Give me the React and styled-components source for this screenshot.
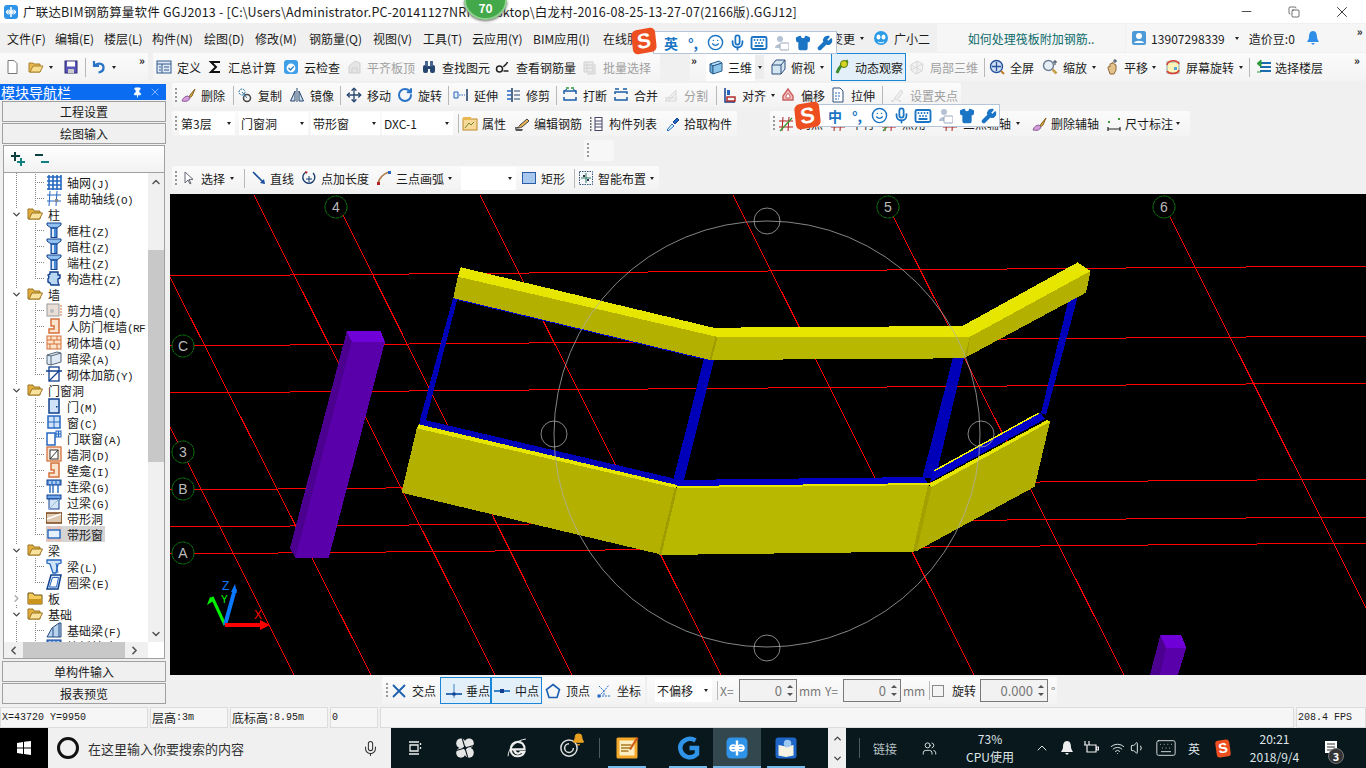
import React from "react";
import styled, { createGlobalStyle } from "styled-components";
import { Mic, Smile, Keyboard, Shirt, Wrench, Bell, Wifi, Volume1, ChevronUp, ChevronDown, ChevronLeft, ChevronRight, Move, X, Minus, Copy, Pin, RotateCw, Users } from "lucide-react";

const GlobalStyle = createGlobalStyle`
  html, body { margin: 0; padding: 0; background: #f0f0f0; overflow: hidden; }
  * { box-sizing: border-box; }
  body { font-family: "Noto Sans CJK SC", "Noto Sans", sans-serif; font-size: 12px; color: #1b1b1b; }
`;

const Page = styled.div`
  width: 1366px;
  height: 768px;
  display: flex;
  flex-direction: column;
  position: relative;
  overflow: hidden;
  background: #f0f0f0;
`;

/* ---------- title + menu ---------- */
const TitleBar = styled.div`
  height: 23px;
  display: flex;
  align-items: center;
  background: #fff;
  padding-left: 3px;
  flex: none;
`;
const TitleText = styled.div`
  margin-left: 4px;
  font-size: 12.5px;
  white-space: nowrap;
  letter-spacing: 0.2px;
`;
const WinButtons = styled.div`
  margin-left: auto;
  display: flex;
`;
const WinButton = styled.div`
  width: 48px;
  height: 22px;
  display: flex;
  align-items: center;
  justify-content: center;
  color: #111;
`;
const ScoreBadge = styled.div`
  position: absolute;
  left: 464px;
  top: 0;
  width: 43px;
  height: 20px;
  border-radius: 0 0 22px 22px / 0 0 20px 20px;
  background: #43a84a;
  border: 2px solid #8fd08f;
  border-top: none;
  box-shadow: 0 1px 3px #666;
  color: #fff;
  font-size: 12px;
  font-weight: 700;
  line-height: 15px;
  text-align: center;
`;
const MenuBar = styled.div`
  height: 30px;
  display: flex;
  align-items: center;
  flex: none;
`;
const MenuItem = styled.div`
  width: ${(p) => p.$w}px;
  padding-left: ${(p) => p.$pad ?? 7}px;
  flex: none;
  display: flex;
  align-items: center;
  gap: 5px;
  white-space: nowrap;
`;
const NewsTab = styled.div`
  width: 188px;
  height: 28px;
  flex: none;
  background: #f6f6f6;
  border-radius: 3px;
  color: #0d6b6b;
  display: flex;
  align-items: center;
  justify-content: center;
`;
const UserBox = styled.div`
  flex: 1;
  height: 28px;
  margin-left: 1px;
  padding-left: 5px;
  background: #f6f6f6;
  display: flex;
  align-items: center;
  gap: 4px;
  position: relative;
`;
const UserName = styled.span`
  font-size: 12px;
  letter-spacing: 0.05px;
`;

/* ---------- toolbars ---------- */
const Row = styled.div`
  height: ${(p) => p.$h}px;
  margin-top: ${(p) => p.$mt ?? 0}px;
  display: flex;
  flex: none;
`;
const Group = styled.div`
  width: ${(p) => p.$w}px;
  margin-left: ${(p) => p.$ml ?? 0}px;
  padding-left: ${(p) => p.$pad ?? 1}px;
  flex: none;
  display: flex;
  align-items: center;
  background: linear-gradient(#fbfbfb, #f3f3f3);
  border-radius: 2px;
`;
const ToolItem = styled.div`
  width: ${(p) => p.$w}px;
  height: 100%;
  padding-left: ${(p) => p.$pad ?? 0}px;
  margin-left: ${(p) => p.$ml ?? 0}px;
  flex: none;
  display: flex;
  align-items: center;
  gap: ${(p) => p.$gap ?? 5}px;
  white-space: nowrap;
  overflow: hidden;
  color: ${(p) => (p.$dis ? "#a0a0a0" : "#1b1b1b")};
  background: ${(p) => (p.$on ? "#e3eff9" : p.$white ? "#fff" : "transparent")};
  border: ${(p) => (p.$on ? "1px solid #1a86d8" : "none")};
  svg { opacity: ${(p) => (p.$dis ? 0.4 : 1)}; }
`;
const Caret = styled.i`
  flex: none;
  width: 0;
  height: 0;
  margin-left: ${(p) => p.$ml ?? 0}px;
  border-left: 2.5px solid transparent;
  border-right: 2.5px solid transparent;
  border-top: 3px solid #222;
`;
const Sep = styled.div`
  width: ${(p) => p.$w}px;
  margin-left: ${(p) => p.$ml ?? 0}px;
  height: 19px;
  flex: none;
  border-left: 1px solid #b8b8b8;
`;
const Grip = styled.div`
  width: 5px;
  height: 15px;
  flex: none;
  margin-left: 2px;
  background: repeating-linear-gradient(#999 0 2px, transparent 2px 4px) left / 2px 100% no-repeat;
`;
const Overflow = styled.span`
  flex: none;
  width: ${(p) => p.$w}px;
  padding-left: ${(p) => p.$pad ?? 0}px;
  margin-left: ${(p) => p.$ml ?? 0}px;
  align-self: flex-start;
  font-size: 11px;
  line-height: 14px;
  font-weight: 700;
`;
const Select = styled.div`
  width: ${(p) => p.$w}px;
  height: 23px;
  margin-left: ${(p) => p.$ml ?? 0}px;
  margin-right: ${(p) => p.$mr ?? 0}px;
  padding: 0 4px 0 2px;
  flex: none;
  display: flex;
  align-items: center;
  justify-content: space-between;
  background: #fff;
`;
const CaretBox = styled.div`
  width: 9px;
  height: 24px;
  flex: none;
  display: flex;
  align-items: center;
  justify-content: center;
  background: #ececec;
`;
const GripBox = styled.div`
  margin-left: 414px;
  width: 30px;
  padding-left: 1px;
  display: flex;
  align-items: center;
  background: #f7f7f7;
  border-radius: 2px;
`;

/* ---------- main area ---------- */
const Main = styled.div`
  height: 626px;
  display: flex;
  flex: none;
`;
const LeftPane = styled.div`
  width: 166px;
  padding-top: 3px;
  flex: none;
  display: flex;
  flex-direction: column;
`;
const PaneHead = styled.div`
  height: 16px;
  flex: none;
  background: #0a6cf0;
  color: #fff;
  font-size: 14px;
  line-height: 16px;
  display: flex;
  align-items: center;
  padding-left: 1px;
  svg { flex: none; }
`;
const PaneTitle = styled.span`
  flex: 1;
`;
const PaneButton = styled.div`
  height: 21px;
  margin: ${(p) => p.$mt ?? 1}px 0 0 2px;
  flex: none;
  border: 1px solid #a0a0a0;
  background: #f0f0f0;
  display: flex;
  align-items: center;
  justify-content: center;
`;
const TreeBox = styled.div`
  height: 514px;
  margin: 1px 1px 0 3px;
  flex: none;
  border: 1px solid #a0a0a0;
  display: flex;
  flex-direction: column;
  background: #fff;
`;
const TreeTools = styled.div`
  height: 27px;
  flex: none;
  padding-left: 6px;
  display: flex;
  align-items: center;
  gap: 8px;
  background: linear-gradient(#fff, #f2f2f2);
  border-bottom: 1px solid #a0a0a0;
`;
const TreeMiddle = styled.div`
  flex: 1;
  min-height: 0;
  display: flex;
`;
const TreeList = styled.div`
  flex: 1;
  min-width: 0;
  overflow: hidden;
  padding-top: 1px;
  background: repeating-linear-gradient(#888 0 1px, transparent 1px 2px) 12px 0 / 1px 100% no-repeat;
`;
const TreeRow = styled.div`
  height: 16px;
  display: flex;
  align-items: center;
  white-space: nowrap;
  padding-left: ${(p) => (p.$child ? 42 : 7)}px;
  ${(p) =>
    p.$child &&
    `background:
      repeating-linear-gradient(#888 0 1px, transparent 1px 2px) 31px 0 / 1px ${p.$last ? "8px" : "100%"} no-repeat,
      repeating-linear-gradient(90deg, #888 0 1px, transparent 1px 2px) 31px 8px / 10px 1px no-repeat;`}
`;
const Expander = styled.span`
  width: 11px;
  flex: none;
  display: flex;
  color: ${(p) => (p.$closed ? "#aaa" : "#444")};
  background: #fff;
  margin-right: 5px;
`;
const RowLabel = styled.span`
  display: flex;
  align-items: center;
  gap: ${(p) => p.$gap}px;
  height: 16px;
  padding-right: 2px;
  background: ${(p) => (p.$sel ? "#d4d4d4" : "transparent")};
`;
const TreeKey = styled.span`
  font-family: "Liberation Mono", monospace;
  font-size: 11px;
  letter-spacing: -0.6px;
`;
const ScrollV = styled.div`
  width: 16px;
  flex: none;
  display: flex;
  flex-direction: column;
  background: #f0f0f0;
  color: #555;
`;
const ScrollEnd = styled.div`
  height: ${(p) => p.$s}px;
  flex: none;
  display: flex;
  align-items: center;
  justify-content: center;
`;
const TrackV = styled.div`
  flex: 1;
`;
const ThumbV = styled.div`
  margin-top: 60px;
  height: 212px;
  background: #c8c8c8;
`;
const ScrollH = styled.div`
  height: 16px;
  flex: none;
  width: 144px;
  display: flex;
  align-items: center;
  background: #f0f0f0;
  color: #555;
  padding-left: 3px;
`;
const ThumbH = styled.div`
  width: 102px;
  height: 16px;
  margin: 0 3px 0 3px;
  background: #c8c8c8;
`;
const RightCol = styled.div`
  flex: 1;
  min-width: 0;
  padding-left: 4px;
  display: flex;
  flex-direction: column;
`;
const CanvasSvg = styled.svg`
  display: block;
  width: 1196px;
  height: 481px;
  margin-top: 4px;
  flex: none;
  background: #000;
`;
const SnapLabel = styled.span`
  width: ${(p) => p.$w}px;
  padding-left: ${(p) => p.$pad ?? 0}px;
  flex: none;
  color: ${(p) => p.$c ?? "#777"};
`;
const Spin = styled.div`
  width: ${(p) => p.$w}px;
  height: 23px;
  flex: none;
  border: 1px solid #7a7a7a;
  display: flex;
  align-items: center;
  justify-content: flex-end;
  gap: 5px;
  padding-right: 3px;
  color: #777;
  font-size: 13px;
  background: #f2f2f2;
`;
const SpinArrows = styled.span`
  display: flex;
  flex-direction: column;
  gap: 5px;
  i { display: block; width: 0; height: 0; border-left: 3px solid transparent; border-right: 3px solid transparent; }
  i:first-child { border-bottom: 3px solid #555; }
  i:last-child { border-top: 3px solid #555; }
`;
const Check = styled.span`
  width: 12px;
  height: 12px;
  flex: none;
  border: 1px solid #888;
  background: #f4f4f4;
`;

/* ---------- status + taskbar ---------- */
const StatusBar = styled.div`
  height: 21px;
  flex: none;
  display: flex;
  gap: 2px;
`;
const StatusCell = styled.div`
  width: ${(p) => p.$w ? `${p.$w}px` : "auto"};
  flex: ${(p) => (p.$w ? "none" : 1)};
  padding-left: 1px;
  border: 1px solid #dcdcdc;
  background: #f6f6f6;
  display: flex;
  align-items: center;
  white-space: nowrap;
  font-family: "Liberation Mono", "Noto Sans CJK SC", monospace;
  font-size: 10px;
  span { font-family: "Noto Sans CJK SC", sans-serif; font-size: 12px; }
`;
const Taskbar = styled.div`
  height: 40px;
  flex: none;
  display: flex;
  align-items: center;
  background: #09181d;
  color: #dfe6e8;
`;
const StartButton = styled.div`
  width: 48px;
  height: 40px;
  flex: none;
  background: #000;
  display: flex;
  align-items: center;
  justify-content: center;
`;
const SearchBox = styled.div`
  width: 343px;
  height: 40px;
  flex: none;
  padding: 0 12px 0 9px;
  background: #f0f0f0;
  color: #333;
  font-size: 13px;
  display: flex;
  align-items: center;
  gap: 9px;
`;
const Cortana = styled.span`
  width: 22px;
  height: 22px;
  flex: none;
  border-radius: 50%;
  border: 3px solid #111;
`;
const SearchText = styled.span`
  flex: 1;
`;
const TaskButton = styled.div`
  width: ${(p) => p.$w}px;
  height: 40px;
  margin-left: ${(p) => p.$ml ?? 0}px;
  flex: none;
  position: relative;
  display: flex;
  align-items: center;
  justify-content: center;
  background: ${(p) => (p.$cur ? "#33474e" : "transparent")};
  &::after {
    content: "";
    display: ${(p) => (p.$run ? "block" : "none")};
    position: absolute;
    left: ${(p) => (p.$cur ? 0 : 5)}px;
    right: ${(p) => (p.$cur ? 0 : 5)}px;
    bottom: 0;
    height: 2px;
    background: #76b9ed;
  }
`;
const TaskDivider = styled.div`
  width: 1px;
  height: 20px;
  flex: none;
  margin-left: ${(p) => p.$ml}px;
  margin-right: ${(p) => p.$mr}px;
  background: #4a5a60;
`;
const TaskScroller = styled.div`
  width: 18px;
  height: 40px;
  margin-left: 18px;
  flex: none;
  background: #f0f0f0;
  color: #444;
  display: flex;
  flex-direction: column;
  align-items: center;
  justify-content: space-around;
`;
const TrayText = styled.span`
  flex: none;
  margin-left: ${(p) => p.$ml ?? 0}px;
  color: ${(p) => p.$c ?? "#dfe6e8"};
`;
const TraySlot = styled.span`
  flex: none;
  width: ${(p) => p.$w ?? 16}px;
  margin-left: ${(p) => p.$ml ?? 0}px;
  display: flex;
  justify-content: center;
`;
const BellMark = styled.span`
  position: absolute;
  left: 29px;
  top: 5px;
  display: flex;
`;
const TwoLine = styled.div`
  width: ${(p) => p.$w}px;
  margin-left: ${(p) => p.$ml ?? 0}px;
  flex: none;
  display: flex;
  flex-direction: column;
  align-items: center;
  line-height: 18px;
`;
const NoteBadge = styled.span`
  position: absolute;
  right: 5px;
  bottom: 4px;
  width: 16px;
  height: 16px;
  border-radius: 50%;
  background: #333;
  border: 1px solid #777;
  color: #fff;
  font-size: 11px;
  font-weight: 700;
  display: flex;
  align-items: center;
  justify-content: center;
`;

/* ---------- sogou IME bar, floats over the toolbars ---------- */
const ImeBar = styled.div`
  position: absolute;
  left: ${(p) => p.$x}px;
  top: ${(p) => p.$y}px;
  width: ${(p) => p.$w}px;
  height: 23px;
  background: #fff;
  border: 1px solid #b6c6d8;
  display: flex;
  align-items: center;
  padding-left: ${(p) => p.$pad}px;
  color: #1b75c4;
`;
const ImeSlot = styled.span`
  width: 22px;
  flex: none;
  display: flex;
  justify-content: center;
  font-weight: 700;
  font-size: 14px;
`;
const SogouLogo = styled.div`
  position: absolute;
  left: ${(p) => p.$x}px;
  top: ${(p) => p.$y}px;
  width: ${(p) => p.$s}px;
  height: ${(p) => p.$s}px;
  border-radius: 5px;
  background: #ee4f20;
  color: #fff;
  font-family: "Liberation Sans", sans-serif;
  font-size: ${(p) => p.$s - 3}px;
  font-weight: 700;
  line-height: ${(p) => p.$s}px;
  text-align: center;
  transform: rotate(-10deg) skewX(-4deg);
  z-index: 2;
`;
const TraySogou = styled.span`
  width: 14px;
  height: 17px;
  display: block;
  border-radius: 3px;
  background: #ee4f20;
  color: #fff;
  font-family: "Liberation Sans", sans-serif;
  font-size: 14px;
  font-weight: 700;
  line-height: 17px;
  text-align: center;
  transform: rotate(-8deg);
`;

/* ---------- drawn icons ---------- */
const Svg = styled.svg`
  width: ${(p) => p.$s}px;
  height: ${(p) => p.$s}px;
  flex: none;
  display: block;
`;
const B = "#2467c0";
const D = "#12408f";
const O = "#d4703a";
const ICONS = {
  new: <path d="M4 1.5h6l3 3v10H4z" fill="#fff" stroke="#777" />,
  open: <><path d="M1 13V4h4l1 1h6v8z" fill="#e8b94f" stroke="#a8802c" /><path d="M2 13l3-6h10l-3 6z" fill="#f7dc8c" stroke="#a8802c" /></>,
  save: <><rect x="2" y="2" width="12" height="12" fill="#5a55b8" stroke="#2c2a70" /><rect x="4" y="2.5" width="8" height="5" fill="#fff" /><rect x="5" y="10" width="6" height="4" fill="#ccc" /></>,
  undo: <path d="M3 2v5h5M3.5 7C6 3.5 12 4 12.5 8c.3 3-2 5-5 5.5" fill="none" stroke="#2a74c8" strokeWidth="2.2" />,
  define: <><rect x="1" y="2" width="14" height="12" fill="#dfe9f5" stroke="#335a8c" /><path d="M1 5h14M6 5v9M3 8h2M3 11h2M8 8h5M8 11h5" stroke="#335a8c" /></>,
  sigma: <path d="M13 3H4l5 5-5 5h9" fill="none" stroke="#111" strokeWidth="2" />,
  cloud: <><rect x="1" y="1" width="14" height="14" rx="3" fill="#3f9fe8" /><circle cx="8" cy="9" r="4.4" fill="#fff" /><path d="M5.5 9l2 2 3.2-3.6" fill="none" stroke="#2c7cc8" strokeWidth="1.4" /></>,
  levelTop: <path d="M3 14V7l6-5 5 2v10zM6 14V9h5v5" fill="#ccc" stroke="#999" />,
  find: <><rect x="2" y="6" width="5" height="8" rx="2" fill="#26456f" /><rect x="9" y="6" width="5" height="8" rx="2" fill="#26456f" /><rect x="4" y="2" width="3" height="5" fill="#49688f" /><rect x="9" y="2" width="3" height="5" fill="#49688f" /><rect x="7" y="7" width="2" height="3" fill="#26456f" /></>,
  rebar: <><circle cx="4.5" cy="10" r="3" fill="none" stroke="#222" strokeWidth="1.5" /><path d="M8.5 8c1-2 3-2 4-5M8.5 12h5" stroke="#222" fill="none" strokeWidth="1.5" /></>,
  batch: <path d="M2 3h9v10H2zM2 6h9M2 9h9M5 3v10M13 5v10H5" fill="#ddd" stroke="#999" />,
  cube: <><path d="M2 5l9-3 3 2-9 3z" fill="#b6dcf5" stroke="#2c5f8c" /><path d="M2 5l3 2v8l-3-2z" fill="#6bafe0" stroke="#2c5f8c" /><path d="M5 7l9-3v8l-9 3z" fill="#8ec6ea" stroke="#2c5f8c" /></>,
  topView: <><path d="M6 1h9v9l-4 5H2V6z" fill="#d5e6f3" stroke="#2e4f7a" /><path d="M2 6h9v9M11 6l4-5" fill="none" stroke="#2e4f7a" /></>,
  orbit: <><path d="M3 14C5 8 9 4 14 2" stroke="#3e8d2d" strokeWidth="3" fill="none" /><circle cx="10" cy="5" r="3.5" fill="#d5d522" stroke="#567a10" /></>,
  local3d: <path d="M2 6l6-4 6 3-1 7-6 3-5-4zM8 2v13M2 6l11 6M14 5L2 11" fill="#eee" stroke="#aaa" />,
  full: <><circle cx="7.5" cy="7.5" r="6" fill="#cfe0f6" stroke="#27529a" strokeWidth="1.4" /><path d="M7.5 3v9M3 7.5h9" stroke="#27529a" strokeWidth="1.3" /><path d="M12 12l3 3" stroke="#c07a2a" strokeWidth="2" /></>,
  zoom: <><circle cx="6.5" cy="6.5" r="5" fill="#e8eef6" stroke="#6b7d94" strokeWidth="1.4" /><path d="M10.5 10.5l4 4" stroke="#c9a04a" strokeWidth="2.5" /><path d="M13 1v5M11 3h4" stroke="#345" /></>,
  hand: <><path d="M4 9c0-2 1-2 2-1V5c1-1 2-1 2 0V4c1-1 2 0 2 1l2 1v5l-2 4H6z" fill="#e5c28a" stroke="#8a6a35" /><path d="M11 0v4M9 2h4" stroke="#345" /></>,
  screen: <><rect x="2" y="3" width="12" height="11" fill="#fdf3b8" stroke="#8aa" /><path d="M2 6C3 1 12 0 14 5M14 11c-1 4-9 5-12 1" fill="none" stroke="#d84030" strokeWidth="1.6" /><rect x="9" y="8" width="3" height="3" fill="#53a7d8" /></>,
  floors: <><path d="M4 4h11M4 8h11M4 12h11" stroke="#1a6cae" strokeWidth="2.2" /><path d="M5 1L1 4.5 5 8zM1 13h4" fill="#2a9a3a" stroke="#2a9a3a" /></>,
  erase: <><path d="M10 8l5-6-3 7-4 3z" fill="#d9b040" stroke="#8a6020" /><path d="M2 14c1-3 3-5 6-5l2 2c-1 3-4 4-8 3z" fill="#d59ad8" stroke="#8a60a0" /></>,
  copy: <><circle cx="5" cy="5" r="3" fill="none" stroke="#2a74a8" strokeDasharray="2 1" /><circle cx="10" cy="11" r="3.5" fill="none" stroke="#444" strokeWidth="1.5" /><path d="M5 5l5 6" stroke="#2a74a8" /></>,
  mirror: <><path d="M8 1v14" stroke="#27476f" /><path d="M6 4L1.5 14H6zM10 4l4.5 10H10z" fill="#cbd9ea" stroke="#27476f" /></>,
  extend: <><path d="M14 2v12" stroke="#27476f" strokeWidth="1.6" /><path d="M1 5h4v6H1z" fill="#eaf0f8" stroke="#2467c0" /><path d="M6 8h6" stroke="#2467c0" strokeDasharray="1.5 1" /></>,
  trim: <><path d="M7 1v14" stroke="#27476f" strokeWidth="1.6" /><path d="M2 4h4M2 8h4M2 12h4" stroke="#2467c0" strokeWidth="1.6" /><path d="M9 4h6M9 8h6M9 12h6" stroke="#27476f" strokeWidth="1" /></>,
  cut: <><path d="M2 7V4h12v3M2 10v3h12v-3" fill="none" stroke="#1b5da8" strokeWidth="1.5" /><path d="M4 1h3M9 1h3" stroke="#2a9a3a" strokeWidth="1.5" /><path d="M2 4l3-2M14 4l-3-2" stroke="#1b5da8" /></>,
  merge: <><path d="M2 7V5h12v2M2 10v3h12v-3" fill="none" stroke="#1b5da8" strokeWidth="1.5" /><path d="M2 2h4M10 2h4" stroke="#1b5da8" strokeWidth="1.5" /></>,
  split: <path d="M2 14L13 3v11zM5 14l8-8M2 11h10" fill="#eee" stroke="#aaa" />,
  align: <><path d="M4 1v14h10" stroke="#1a3f8a" strokeWidth="1.5" fill="none" /><rect x="6" y="3" width="3" height="5" fill="#2467c0" /><rect x="6" y="10" width="8" height="4" fill="none" stroke="#b02020" strokeWidth="1.4" /></>,
  offset: <><path d="M3 13V9l5-7 5 7v4z" fill="#f4c2c2" stroke="#c86060" strokeWidth="1.4" /><path d="M6 11V9l2-3 2 3v2z" fill="#fff" stroke="#c86060" /></>,
  stretch: <><path d="M3 1h7l3 3v11H3z" fill="#fff" stroke="#2e4f7a" /><path d="M5 6h6M5 9h6M5 12h4" stroke="#2467c0" strokeDasharray="2 1" /></>,
  grips: <><path d="M5 12l7-9 2 2-6 8z" fill="#e4e4e4" stroke="#aaa" /><path d="M2 14h3M9 14h3" stroke="#aaa" strokeWidth="1.6" /></>,
  prop: <><rect x="1" y="3" width="14" height="11" fill="#f8d99a" stroke="#c08a2a" /><path d="M3 12l4-5 2 2 3-3" stroke="#6a8a2a" fill="none" /><rect x="1" y="1" width="8" height="3" fill="#e8b94f" /></>,
  edit: <><path d="M1 13h8l-1 2H2z" fill="#555" /><path d="M1 12c3 0 4-1 5-3l7-6 2 2-7 6c-2 1-4 1-7 1z" fill="#e5b450" stroke="#444" /></>,
  list: <><path d="M2 2h2M2 5h2M2 8h2M2 11h2M2 14h2" stroke="#444" strokeWidth="1.5" strokeDasharray="1.5 1" /><rect x="7" y="1.5" width="7" height="13" fill="#fff" stroke="#446" /><path d="M7 5h7M7 8h7M7 11h7" stroke="#446" /></>,
  pick: <><path d="M2 14l5-6 2 2-6 5z" fill="#dff" stroke="#2467c0" /><path d="M8 6l4-4 2 2-4 4z" fill="#2467c0" stroke="#12408f" /></>,
  axis: <path d="M1 5h14M1 11h14M5 1l-1 14M11 1l-1 14" stroke="#b02020" fill="none" />,
  axisG: <><path d="M1 5h14M1 11h14M5 1l-1 14M11 1l-1 14" stroke="#b02020" fill="none" /><path d="M2 15L14 2" stroke="#3a9a3a" strokeWidth="1.3" /></>,
  dim: <><path d="M2 11v4M14 11v4M2 13h12" stroke="#222" strokeWidth="1.2" /><rect x="2" y="5" width="2" height="2" fill="#3a9a3a" /><rect x="12" y="2" width="2" height="2" fill="#3a9a3a" /></>,
  cursor: <path d="M5 2v11l3-3 2 4 1-.6-2-4h4z" fill="#fff" stroke="#667" />,
  line: <><path d="M2 2l11 11" stroke="#1c4f9c" strokeWidth="1.6" /><path d="M14 14l-5-1 4-4z" fill="#1c4f9c" /></>,
  addLen: <><path d="M5 2a6 6 0 1 0 7 1" fill="none" stroke="#1b3f70" strokeWidth="1.4" /><path d="M8 6v6M5 9h6" stroke="#1b3f70" /><path d="M4 1l3 1-2 2z" fill="#b02020" /></>,
  arc: <><path d="M2 14C3 8 7 4 13 2" fill="none" stroke="#b07a4a" strokeWidth="1.6" /><rect x="1" y="12" width="3" height="3" fill="#b02020" /><rect x="12" y="1" width="3" height="3" fill="#2467c0" /></>,
  rect: <rect x="1.5" y="2.5" width="13" height="11" fill="#a9c8ee" stroke="#2a5ca8" />,
  smart: <><rect x="1.5" y="1.5" width="13" height="13" fill="#f4f6fa" stroke="#33557a" strokeDasharray="1.5 1" /><path d="M8 3v10M3 8h10" stroke="#2a7a5a" /><rect x="5" y="5" width="2" height="2" fill="#335" /><rect x="9" y="9" width="2" height="2" fill="#335" /></>,
  cross: <path d="M2 2l12 12M14 2L2 14" stroke="#1c5fb0" strokeWidth="1.8" />,
  perp: <><path d="M0 11h16" stroke="#1c5fb0" strokeWidth="1.8" /><path d="M8 1v14" stroke="#6aa4d8" strokeWidth="1.4" /><rect x="6.5" y="9.5" width="3" height="3" fill="#12408f" /></>,
  mid: <><path d="M0 8h16" stroke="#3a82c8" strokeWidth="2" /><rect x="6" y="6" width="4" height="4" fill="#12408f" /></>,
  vertex: <path d="M8 1.5l6.5 5-2.5 8H4l-2.5-8z" fill="none" stroke="#1c5fb0" strokeWidth="1.6" />,
  coord: <><path d="M3 13h11M3 13l5-5 5-6M3 3l5 5v5" stroke="#2467c0" strokeDasharray="2 1" fill="none" /><rect x="1.5" y="11.5" width="3" height="3" fill="#2467c0" /></>,
  grid: <path d="M1 3h14M1 7h14M1 11h14M1 15h14M3 1v15M7 1v15M11 1v15M15 1v15" stroke={B} strokeWidth="1.6" />,
  auxGrid: <><path d="M1 5h14M1 11h14M4 1l-1 15M11 1l-1 15" stroke={B} /><rect x="9" y="9" width="3" height="3" fill="#888" /></>,
  folder: <><path d="M1 13V3h5l1 2h6v8z" fill="#e2ae3e" stroke="#9b7521" /><path d="M2 13l3-6h10.5l-3 6z" fill="#fae39c" stroke="#9b7521" /></>,
  folderC: <><path d="M1 14V3h5l1 2h8v9z" fill="#f2cb5a" stroke="#6d5413" /><path d="M1 14h14v-5H1z" fill="#c9951e" /></>,
  col: <><path d="M1 1h14v2l-4 3H5L1 3z" fill="#8fc0f0" stroke={D} /><rect x="5" y="6" width="6" height="9.5" fill="#4a8ad8" stroke={D} /><rect x="6" y="7" width="2" height="8" fill="#dceafa" /></>,
  colB: <path d="M4 2h8v3h2v3l-2 1v3l1 3H5l-1-2-2-1v-3l1-2-1-2 2-1z" fill="#b9d6f2" stroke={D} strokeWidth="1.4" />,
  shear: <><rect x="1" y="2" width="12" height="12" fill="#e9dfd6" stroke="#999" /><path d="M14 4h2M14 7h2M14 10h2M14 13h2" stroke={O} /><circle cx="6" cy="9" r="2" fill="#bbb" /></>,
  rf: <path d="M5 1h8v14H3v-4h5V8H5z" fill="#fbe4cf" stroke={O} strokeWidth="1.5" />,
  brick: <><rect x="1" y="2" width="14" height="13" fill="#fde3c8" stroke={O} /><path d="M1 6h14M1 10h14M5 2v4M11 2v4M8 6v4M4 10v5M11 10v5" stroke={O} /></>,
  hidden: <><path d="M1 5l10-3 4 1v9l-10 3-4-1z" fill="#dfeaf4" stroke="#567" /><path d="M5 6v9M5 6L1 5M5 6l10-3" stroke="#567" fill="none" /></>,
  reinf: <><rect x="3" y="1" width="10" height="14" fill="#fff" stroke={D} strokeWidth="1.3" /><path d="M0 5h16M3 15l10-10" stroke={D} strokeWidth="1.3" /></>,
  door: <><rect x="3" y="1" width="10" height="14" fill="#cfe2f8" stroke={D} strokeWidth="1.5" /><rect x="10" y="8" width="1.5" height="1.5" fill={D} /></>,
  win: <><rect x="2" y="2" width="12" height="12" fill="#cfe2f8" stroke={B} strokeWidth="1.5" /><path d="M8 2v12M2 8h12" stroke={B} /></>,
  doorWin: <><rect x="1" y="3" width="8" height="12" fill="#fff" stroke={B} strokeWidth="1.5" /><rect x="10" y="1" width="5" height="6" fill="#cfe2f8" stroke={B} /><path d="M12.5 1v6M10 4h5" stroke={B} /></>,
  wallHole: <><rect x="1" y="1" width="14" height="14" fill="#fbe4cf" stroke={O} strokeWidth="1.3" /><rect x="4" y="4" width="8" height="9" fill="#fff" stroke="#333" /><path d="M4 13l8-9" stroke="#333" /></>,
  link: <><rect x="1" y="2" width="14" height="5" fill="#5a94dc" stroke={D} /><path d="M4 7v8M12 7v8M7 7v8" stroke={B} strokeWidth="1.4" /><path d="M4 3v3M8 3v3M12 3v3" stroke="#fff" /></>,
  lintel: <><rect x="1" y="1" width="14" height="4" fill="#6ea5e6" stroke={D} /><rect x="3" y="5" width="10" height="10" fill="#d2e4f8" stroke={D} /><path d="M3 15l10-10" stroke="#9bc" /></>,
  stripH: <><rect x="0" y="3" width="16" height="10" fill="#ddc8b0" stroke="#7a4418" strokeWidth="1.5" /><path d="M1 9l14-5" stroke="#fff" strokeWidth="1.5" /></>,
  stripW: <><path d="M0 2h16M0 14h16M3 0v16M13 0v16" stroke="#f2b6a8" /><rect x="2" y="4" width="12" height="8" fill="#e6f0fb" stroke={B} strokeWidth="1.4" /></>,
  beam: <><path d="M1 2h14v3l-3 1-2 9H7L4 6 1 5z" fill="#cfe4f8" stroke={B} strokeWidth="1.3" /><path d="M10 5l2 10" stroke={B} /></>,
  ring: <><path d="M5 1h10l-3 14H1z" fill="#dbe9f8" stroke={D} strokeWidth="1.5" /><path d="M6.5 3.5h6L10.5 13h-7z" fill="#fff" stroke={B} /></>,
  footB: <><path d="M1 15l5-9 7-5h2v14z" fill="#b9d3ee" stroke="#234a82" /><path d="M7 6v9M13 1v14" stroke="#234a82" /></>,
  plus: <><path d="M5 1v9M1 5h9" stroke="#0f3f3f" strokeWidth="2" /><path d="M11 7v8M7 11h8" stroke="#0f8080" strokeWidth="2" /></>,
  minus: <><path d="M1 4h8" stroke="#0f3f3f" strokeWidth="2" /><path d="M7 11h8" stroke="#0f8080" strokeWidth="2" /></>,
  appBlue: <><rect x="1" y="1" width="14" height="14" rx="3" fill="#2f93e8" /><path d="M8 3v10M3 8h10" stroke="#fff" strokeWidth="1.6" /><circle cx="5.5" cy="8" r="2" fill="none" stroke="#fff" /><circle cx="10.5" cy="8" r="2" fill="none" stroke="#fff" /></>,
  mascot: <><circle cx="8" cy="8" r="7" fill="#2b9be8" /><ellipse cx="5.5" cy="7" rx="2" ry="2.5" fill="#fff" /><ellipse cx="10.5" cy="7" rx="2" ry="2.5" fill="#fff" /><path d="M5 12c2 1 4 1 6 0" stroke="#fff" fill="none" /></>,
  user: <><rect x="1" y="1" width="14" height="14" rx="2" fill="#4d9ad8" /><circle cx="8" cy="6" r="3" fill="#fff" /><path d="M3 13c1-3 9-3 10 0z" fill="#fff" /></>,
  bellB: <path d="M8 1c3 0 4 3 4 6 0 2 1 3 2 5H2c1-2 2-3 2-5 0-3 1-6 4-6zM6 13h4l-2 2z" fill="#2f8fe8" />,
  winLogo: <path d="M1 3l6-1v5.5H1zM8 1.8L15 1v6.5H8zM1 8.5h6V14l-6-1zM8 8.5h7V15l-7-1z" fill="#fff" />,
  taskView: <path d="M3 2h10M3 14h10M4 5h8v6H4zM14.5 3v2M14.5 7v2" stroke="#eee" fill="none" strokeWidth="1.3" />,
  fan: <><ellipse cx="5" cy="4.6" rx="3.4" ry="3.6" fill="#e6e6e6" /><ellipse cx="11" cy="4.6" rx="3.4" ry="3.6" fill="#e6e6e6" /><ellipse cx="5" cy="11.4" rx="3.4" ry="3.6" fill="#e6e6e6" /><ellipse cx="11" cy="11.4" rx="3.4" ry="3.6" fill="#e6e6e6" /><path d="M8 8L6 1M8 8l7-2M8 8l2 7M8 8l-7 2" stroke="#09181d" strokeWidth="0.8" /></>,
  ie: <><path d="M3.5 9h10C13.500 5.500 11.500 3.500 8.500 3.500 5.500 3.500 3.500 6 3.500 9c0 3.500 2.500 5 5 5 2.500 0 4-1 4.800-3h-2.800C9.800 12.500 6.200 12.600 6 9" fill="none" stroke="#eee" strokeWidth="1.6" /><path d="M1.500 14C1.500 8 8 2 14.500 1.500" fill="none" stroke="#eee" strokeWidth="0.7" /></>,
  swirl: <><circle cx="8" cy="8" r="6.5" fill="none" stroke="#ddd" strokeWidth="1.2" /><path d="M8 4.500a3.500 3.500 0 1 0 3.500 3.500" fill="none" stroke="#ddd" strokeWidth="1.2" /></>,
  sticky: <><rect x="1" y="1" width="14" height="14" rx="1" fill="#f4a92a" /><rect x="3" y="3" width="10" height="10" fill="#fbeec2" /><path d="M4 6h7M4 8h7M4 10h5" stroke="#a87a22" /><path d="M15 1l-5 8" stroke="#d05a1a" strokeWidth="1.5" /></>,
  gApp: <path d="M13 3C8 0 2 4 3 9s7 7 11 3V8H9" fill="none" stroke="#2f93e8" strokeWidth="3" />,
  book: <><rect x="1" y="1" width="14" height="14" rx="2" fill="#1e66c8" /><path d="M3 6l5 1 5-1v7l-5 1-5-1z" fill="#f7f3e3" /><circle cx="9" cy="5" r="2.500" fill="#9cc8f2" /></>,
  battery: <path d="M4 5h9v7H4zM13.500 7h2v3h-2zM2 1v4M6 1v4M1 5h5" fill="none" stroke="#eee" strokeWidth="1.2" />,
  bellW: <path d="M8 1c3 0 4 3 4 6 0 2 1 3 2 5H2c1-2 2-3 2-5 0-3 1-6 4-6zM6 13h4l-2 2z" fill="#eee" />,
  note: <><path d="M2 1h12v12H2z" fill="#fff" /><path d="M4 4h8M4 7h8M4 10h5" stroke="#333" /></>,
  person: <><circle cx="7" cy="4" r="3" fill="#b4c2d4" /><path d="M2 13c0-5 9-5 10-2v2z" fill="#b4c2d4" /><rect x="7" y="8" width="9" height="7" rx="1" fill="#fff" stroke="#9aa8ba" /></>,
};
const Icon = ({ name, size = 16 }) => <Svg $s={size} viewBox="0 0 16 16">{ICONS[name]}</Svg>;

/* ---------- toolbar data ---------- */
const Tools = ({ items }) =>
  items.map((it, i) =>
    typeof it === "number" ? (
      <Sep key={i} $w={it} />
    ) : (
      <ToolItem key={i} $w={it.w} $dis={it.dis} $pad={it.pad} $white={it.white} $on={it.on} $gap={it.gap}>
        {it.custom ?? <Icon name={it.i} />}
        {it.t && <span>{it.t}</span>}
        {it.c && <Caret />}
      </ToolItem>
    )
  );

const fileTools = [
  { i: "new", w: 24 },
  { i: "open", w: 35, c: 1 },
  { i: "save", w: 22 },
  6,
  { i: "undo", w: 47, c: 1 },
];
const mainTools = [
  { i: "define", t: "定义", w: 51 },
  { i: "sigma", t: "汇总计算", w: 76 },
  { i: "cloud", t: "云检查", w: 63 },
  { i: "levelTop", t: "平齐板顶", w: 75, dis: 1 },
  { i: "find", t: "查找图元", w: 74 },
  { i: "rebar", t: "查看钢筋量", w: 87 },
  { i: "batch", t: "批量选择", w: 73, dis: 1 },
];
const viewTools = [
  { i: "orbit", t: "动态观察", w: 75, on: 1, pad: 2 },
  { i: "local3d", t: "局部三维", w: 78, dis: 1, pad: 3 },
  5,
  { i: "full", t: "全屏", w: 53 },
  { i: "zoom", t: "缩放", w: 62, c: 1 },
  { i: "hand", t: "平移", w: 61, gap: 4, c: 1 },
  { i: "screen", t: "屏幕旋转", w: 84, c: 1 },
  7,
  { i: "floors", t: "选择楼层", w: 90, gap: 3 },
];
const editTools = [
  { i: "erase", t: "删除", w: 53 },
  4,
  { i: "copy", t: "复制", w: 52 },
  { i: "mirror", t: "镜像", w: 51 },
  6,
  { custom: <Move size={16} color="#27476f" />, t: "移动", w: 51 },
  { custom: <RotateCw size={16} color="#2a74c8" strokeWidth={3} />, t: "旋转", w: 51 },
  5,
  { i: "extend", t: "延伸", w: 52 },
  { i: "trim", t: "修剪", w: 51 },
  6,
  { i: "cut", t: "打断", w: 51 },
  { i: "merge", t: "合并", w: 50 },
  { i: "split", t: "分割", w: 53, dis: 1 },
  5,
  { i: "align", t: "对齐", w: 59, c: 1 },
  { i: "offset", t: "偏移", w: 50 },
  { i: "stretch", t: "拉伸", w: 52 },
  7,
  { i: "grips", t: "设置夹点", w: 71, dis: 1 },
];
const propTools = [
  { i: "prop", t: "属性", w: 52, gap: 4 },
  { i: "edit", t: "编辑钢筋", w: 74, gap: 4 },
  { i: "list", t: "构件列表", w: 77 },
  { i: "pick", t: "拾取构件", w: 72, gap: 3 },
];
const axisTools = [
  { i: "axisG", t: "两点", w: 52 },
  { i: "axis", t: "平行", w: 51 },
  { i: "axisG", t: "点角", w: 61 },
  { i: "axis", t: "三点辅轴", w: 89, c: 1 },
  { i: "erase", t: "删除辅轴", w: 75, gap: 4 },
  { i: "dim", t: "尺寸标注", w: 82, gap: 3, c: 1 },
];
const drawTools = [
  { i: "cursor", t: "选择", w: 64, c: 1 },
  7,
  { i: "line", t: "直线", w: 50, gap: 3 },
  { i: "addLen", t: "点加长度", w: 75, gap: 4 },
  { i: "arc", t: "三点画弧", w: 85, gap: 4, c: 1 },
];
const drawTools2 = [
  { i: "rect", t: "矩形", w: 53, gap: 4 },
  4,
  { i: "smart", t: "智能布置", w: 80, gap: 4, c: 1 },
];
const snapTools = [
  { i: "cross", t: "交点", w: 49 },
  { i: "perp", t: "垂点", w: 51, on: 1, pad: 5, gap: 4 },
  { i: "mid", t: "中点", w: 51, on: 1, pad: 2 },
  { i: "vertex", t: "顶点", w: 54, pad: 3 },
  { i: "coord", t: "坐标", w: 48 },
];

const menus = [
  ["文件(F)", 48], ["编辑(E)", 49], ["楼层(L)", 48], ["构件(N)", 52], ["绘图(D)", 51], ["修改(M)", 54],
  ["钢筋量(Q)", 64], ["视图(V)", 50], ["工具(T)", 49], ["云应用(Y)", 61], ["BIM应用(I)", 70], ["在线服务", 235],
];

/* ---------- tree data ---------- */
const tree = [
  ["grid", "轴网", "(J)"], ["auxGrid", "辅助轴线", "(O)"],
  ["柱"],
  ["col", "框柱", "(Z)"], ["col", "暗柱", "(Z)"], ["col", "端柱", "(Z)"], ["colB", "构造柱", "(Z)", "last"],
  ["墙"],
  ["shear", "剪力墙", "(Q)"], ["rf", "人防门框墙", "(RF"], ["brick", "砌体墙", "(Q)"], ["hidden", "暗梁", "(A)"], ["reinf", "砌体加筋", "(Y)", "last"],
  ["门窗洞"],
  ["door", "门", "(M)"], ["win", "窗", "(C)"], ["doorWin", "门联窗", "(A)"], ["wallHole", "墙洞", "(D)"], ["rf", "壁龛", "(I)"],
  ["link", "连梁", "(G)"], ["lintel", "过梁", "(G)"], ["stripH", "带形洞", ""], ["stripW", "带形窗", "", "last", "sel"],
  ["梁"],
  ["beam", "梁", "(L)"], ["ring", "圈梁", "(E)", "last"],
  ["板", "closed"],
  ["基础"],
  ["footB", "基础梁", "(F)"],
  ["link", "筏板基础", "(M)"],
];

const TreeRows = () =>
  tree.map((r, i) =>
    r.length <= 2 ? (
      <TreeRow key={i}>
        <Expander $closed={r[1]}>{r[1] ? <ChevronRight size={11} strokeWidth={3} /> : <ChevronDown size={11} strokeWidth={3} />}</Expander>
        <RowLabel $gap={5}>
          <Icon name={r[1] ? "folderC" : "folder"} />
          {r[0]}
        </RowLabel>
      </TreeRow>
    ) : (
      <TreeRow key={i} $child $last={r[3] === "last"}>
        <RowLabel $gap={5} $sel={r[4]}>
          <Icon name={r[0]} />
          <span>
            {r[1]}
            <TreeKey>{r[2]}</TreeKey>
          </span>
        </RowLabel>
      </TreeRow>
    )
  );

/* ---------- 3d view ---------- */
const redLines = [
  [170, 276, 1366, 266], [170, 346, 1366, 336], [170, 393, 1366, 383], [170, 490, 1366, 479], [170, 527, 1366, 517], [170, 554, 1366, 543],
  [170, 277, 371, 675], [170, 427, 294, 675], [254, 195, 495, 675], [334, 197, 572, 675], [480, 195, 721, 675], [733, 195, 974, 675], [884, 198, 1124, 675], [1160, 197, 1366, 608],
];
const bubbles = [["4", 336, 207], ["5", 888, 207], ["6", 1164, 207], ["C", 183, 346], ["3", 183, 452], ["B", 183, 489], ["A", 183, 553]];
const polys = [
  // purple columns
  ["#4b008f", "346.8,331 351.8,341.7 295.5,557.7 290,548.3"],
  ["#5a00ab", "351.8,341.7 385,341.7 328.8,557.7 295.5,557.7"],
  ["#6f00d8", "346.8,331 380.5,331 385,341.7 351.8,341.7"],
  ["#4b008f", "1160.3,635 1166,647.7 1160,675 1150,675"],
  ["#5a00ab", "1166,647.7 1186.2,647.7 1178,675 1160,675"],
  ["#6f00d8", "1160.3,635 1181.3,635 1186.2,647.7 1166,647.7"],
  // blue window frame
  ["#0000b8", "453,298 457,300 425.6,421.7 419.5,421.7"],
  ["#0000b8", "703.9,359 714,360 682.8,485 672,485"],
  ["#0000b8", "952.8,358 964.2,357 935.6,478 922.3,478"],
  ["#0000b8", "1069,298 1077.7,296.7 1046,415 1041,413"],
  ["#0000b8", "420.7,419 673.3,478.3 675,486 418.8,425"],
  ["#0000c8", "675,480 924,477 928,484 675,486"],
  ["#0000c8", "933.8,470 1040.4,413 1045,419 930,482"],
  // upper wall
  ["#e6e600", "460.9,267.3 713.4,327.7 716.5,336.7 457.8,276.7"],
  ["#b3b000", "457.8,276.7 716.5,336.7 710.4,360 453.2,298.3"],
  ["#e6e600", "713.4,327.7 962.3,326 970,336.7 716.5,336.7"],
  ["#b8b800", "716.5,336.7 970,336.7 964,358.3 710.4,360"],
  ["#e6e600", "962.3,326 1077.7,262.3 1090.6,271 970,336.7"],
  ["#b3b000", "970,336.7 1090.6,271 1086,292.7 967,356.7"],
  ["#a3a100", "970,336.7 967,356.7 964,358.3"],
  // lower wall
  ["#e6e600", "418.8,424.3 677,485 676,490 416.8,428.3"],
  ["#b3b000", "416.8,428.3 676,488 659,554 401.5,492.7"],
  ["#e6e600", "677,486 930,483 928,487 677,490"],
  ["#b8b800", "677,488 928,485 912.8,551.7 660,555"],
  ["#e6e600", "928,484.3 1047,420 1050.6,421.7 931.8,486.7"],
  ["#b0ae00", "931.8,486.7 1050,421.7 1034.7,486.7 916.6,551"],
  ["#a3a100", "928,485 931.8,486.7 916.6,551 912.8,551.7"],
];
const gizmos = [[767, 221], [767, 648], [554, 434], [981, 434]];

const View3D = () => (
  <CanvasSvg viewBox="170 194 1196 481">
    <g stroke="#f00" strokeWidth="1" shapeRendering="crispEdges">
      {redLines.map((l, i) => <line key={i} x1={l[0]} y1={l[1]} x2={l[2]} y2={l[3]} />)}
    </g>
    {bubbles.map(([t, x, y]) => (
      <g key={t}>
        <circle cx={x} cy={y} r="11" fill="#000" stroke="#0c7a0c" strokeDasharray="4 0.6" />
        <text x={x} y={y + 5} textAnchor="middle" fill="#bbb" fontSize="14" fontFamily="Liberation Sans">{t}</text>
      </g>
    ))}
    <g shapeRendering="crispEdges">
      {polys.map((p, i) => <polygon key={i} fill={p[0]} points={p[1]} />)}
      <line x1="453" y1="298.5" x2="710" y2="360.5" stroke="#0000d0" />
      <line x1="933.8" y1="471" x2="1038.5" y2="413.3" stroke="#f0f000" strokeWidth="1.5" />
      <line x1="676" y1="488" x2="660" y2="555" stroke="#9e9c00" strokeWidth="2.5" />
      <line x1="716.5" y1="337" x2="710.5" y2="360" stroke="#9e9c00" strokeWidth="2" />
    </g>
    <g fill="none" stroke="#b0b0b0" strokeOpacity="0.75">
      <circle cx="767" cy="434" r="213" />
      {gizmos.map(([x, y]) => <circle key={x + "-" + y} cx={x} cy={y} r="13" />)}
    </g>
    <path d="M225 625l-13-28" stroke="#00f000" strokeWidth="3" />
    <path d="M207 605l3-8 5 3z" fill="#00f000" />
    <path d="M225 625l10-36" stroke="#0a78ff" strokeWidth="4" />
    <path d="M231 592l4-8 2 9z" fill="#0a78ff" />
    <path d="M225 625h35" stroke="#f00" strokeWidth="4" />
    <path d="M260 620l10 5-10 5z" fill="#f00" />
    <g fontFamily="Liberation Sans" fontSize="12">
      <text x="222" y="590" fill="#0a78ff">Z</text>
      <text x="221" y="603" fill="#0f0" fontSize="10">Y</text>
      <text x="254" y="619" fill="#f00">X</text>
    </g>
  </CanvasSvg>
);

const ImeIcons = () => (
  <>
    <ImeSlot>°,</ImeSlot>
    <ImeSlot><Smile size={17} /></ImeSlot>
    <ImeSlot><Mic size={17} strokeWidth={2.5} /></ImeSlot>
    <ImeSlot><Keyboard size={18} strokeWidth={2.5} /></ImeSlot>
    <ImeSlot><Icon name="person" /></ImeSlot>
    <ImeSlot><Shirt size={16} fill="#1b75c4" /></ImeSlot>
    <ImeSlot><Wrench size={16} fill="#1b75c4" /></ImeSlot>
  </>
);

export default function App() {
  return (
    <Page>
      <GlobalStyle />
      <TitleBar>
        <Icon name="appBlue" />
        <TitleText>广联达BIM钢筋算量软件 GGJ2013 - [C:\Users\Administrator.PC-20141127NRH\Desktop\白龙村-2016-08-25-13-27-07(2166版).GGJ12]</TitleText>
        <WinButtons>
          <WinButton><Minus size={15} strokeWidth={1.2} /></WinButton>
          <WinButton><Copy size={12} strokeWidth={1.2} /></WinButton>
          <WinButton><X size={18} strokeWidth={1.1} /></WinButton>
        </WinButtons>
      </TitleBar>
      <ScoreBadge>70</ScoreBadge>

      <MenuBar>
        {menus.map(([t, w]) => <MenuItem key={t} $w={w}>{t}</MenuItem>)}
        <MenuItem $w={42} $pad={0}>变更<Caret /></MenuItem>
        <MenuItem $w={64} $pad={0}><Icon name="mascot" />广小二</MenuItem>
        <NewsTab>如何处理筏板附加钢筋..</NewsTab>
        <UserBox>
          <Icon name="user" />
          <UserName>13907298339</UserName>
          <Caret $ml={6} />
          <TrayText $ml={6} $c="#1b1b1b">造价豆:0</TrayText>
          <TraySlot $ml={6}><Icon name="bellB" /></TraySlot>
          <Overflow $w={10} $ml={32}>»</Overflow>
        </UserBox>
      </MenuBar>

      <Row $h={28}>
        <Group $w={148} $pad={4}>
          <Tools items={fileTools} />
          <Overflow $w={10} $pad={1}>»</Overflow>
        </Group>
        <Group $w={507} $ml={5} $pad={3}>
          <Tools items={mainTools} />
        </Group>
        <Group $w={676} $ml={30} $pad={0}>
          <Overflow $w={16} $pad={1}>»</Overflow>
          <ToolItem $w={49} $white $pad={2} $gap={4}><Icon name="cube" /><span>三维</span></ToolItem>
          <CaretBox><Caret /></CaretBox>
          <ToolItem $w={61} $ml={6}><Icon name="topView" /><span>俯视</span><Caret /></ToolItem>
          <Tools items={viewTools} />
          <Overflow $w={18} $pad={8}>»</Overflow>
        </Group>
      </Row>

      <Main>
        <LeftPane>
          <PaneHead>
            <PaneTitle>模块导航栏</PaneTitle>
            <Pin size={11} fill="#fff" />
            <TraySlot $w={23}><X size={12} strokeWidth={1} /></TraySlot>
          </PaneHead>
          <PaneButton>工程设置</PaneButton>
          <PaneButton>绘图输入</PaneButton>
          <TreeBox>
            <TreeTools>
              <Icon name="plus" />
              <Icon name="minus" />
            </TreeTools>
            <TreeMiddle>
              <TreeList><TreeRows /></TreeList>
              <ScrollV>
                <ScrollEnd $s={17}><ChevronUp size={12} strokeWidth={3} /></ScrollEnd>
                <TrackV><ThumbV /></TrackV>
                <ScrollEnd $s={17}><ChevronDown size={12} strokeWidth={3} /></ScrollEnd>
              </ScrollV>
            </TreeMiddle>
            <ScrollH>
              <ChevronLeft size={13} strokeWidth={3} />
              <ThumbH />
              <ChevronRight size={13} strokeWidth={3} />
            </ScrollH>
          </TreeBox>
          <PaneButton $mt={2}>单构件输入</PaneButton>
          <PaneButton>报表预览</PaneButton>
        </LeftPane>

        <RightCol>
          <Row $h={24} $mt={2}>
            <Group $w={789} $ml={2}>
              <Grip />
              <Tools items={editTools} />
            </Group>
          </Row>
          <Row $h={25} $mt={4}>
            <Group $w={565} $ml={2}>
              <Grip />
              <Select $w={56} $ml={-1}>第3层<Caret /></Select>
              <Select $w={69} $ml={4}>门窗洞<Caret /></Select>
              <Select $w={69} $ml={3}>带形窗<Caret /></Select>
              <Select $w={71} $ml={2}>DXC-1<Caret /></Select>
              <Sep $w={4} $ml={5} />
              <Tools items={propTools} />
            </Group>
            <Group $w={420} $ml={33}>
              <Grip />
              <Tools items={axisTools} />
            </Group>
          </Row>
          <Row $h={21} $mt={4}>
            <GripBox><Grip /></GripBox>
          </Row>
          <Row $h={24} $mt={5}>
            <Group $w={487} $ml={2}>
              <Grip />
              <Tools items={drawTools} />
              <Select $w={55} $mr={5}><span /><Caret /></Select>
              <Tools items={drawTools2} />
            </Group>
          </Row>
          <View3D />
          <Row $h={27} $mt={2}>
            <Group $w={263} $ml={212} $pad={2}>
              <Grip />
              <Tools items={snapTools} />
            </Group>
            <Group $w={410} $ml={2} $pad={8}>
              <Select $w={57}>不偏移<Caret /></Select>
              <Sep $w={3} $ml={5} />
              <SnapLabel $w={19}>X=</SnapLabel>
              <Spin $w={58}>0<SpinArrows><i /><i /></SpinArrows></Spin>
              <SnapLabel $w={26} $pad={2}>mm</SnapLabel>
              <SnapLabel $w={20} $pad={2}>Y=</SnapLabel>
              <Spin $w={58}>0<SpinArrows><i /><i /></SpinArrows></Spin>
              <SnapLabel $w={28} $pad={2}>mm</SnapLabel>
              <Sep $w={3} />
              <Check />
              <SnapLabel $w={36} $pad={8} $c="#1b1b1b">旋转</SnapLabel>
              <Spin $w={68}>0.000<SpinArrows><i /><i /></SpinArrows></Spin>
              <SnapLabel $w={9} $pad={3}>°</SnapLabel>
            </Group>
          </Row>
        </RightCol>
      </Main>

      <StatusBar>
        <StatusCell $w={148}>X=43720 Y=9950</StatusCell>
        <StatusCell $w={78}><span>层高</span>:3m</StatusCell>
        <StatusCell $w={98}><span>底标高</span>:8.95m</StatusCell>
        <StatusCell $w={48}>0</StatusCell>
        <StatusCell />
        <StatusCell $w={70}>208.4 FPS</StatusCell>
      </StatusBar>

      <Taskbar>
        <StartButton><Icon name="winLogo" /></StartButton>
        <SearchBox>
          <Cortana />
          <SearchText>在这里输入你要搜索的内容</SearchText>
          <Mic size={17} strokeWidth={1.5} />
        </SearchBox>
        <TaskButton $w={50} $ml={-2}><Icon name="taskView" /></TaskButton>
        <TaskButton $w={52}><Icon name="fan" size={22} /></TaskButton>
        <TaskButton $w={52}><Icon name="ie" size={22} /></TaskButton>
        <TaskButton $w={52}>
          <Icon name="swirl" size={20} />
          <BellMark><Bell size={13} fill="#e8a020" color="#e8a020" /></BellMark>
        </TaskButton>
        <TaskDivider $ml={4} $mr={3} />
        <TaskButton $w={48} $run><Icon name="sticky" size={24} /></TaskButton>
        <TaskButton $w={48} $ml={13} $run><Icon name="gApp" size={24} /></TaskButton>
        <TaskButton $w={48} $ml={1} $run $cur><Icon name="appBlue" size={24} /></TaskButton>
        <TaskButton $w={48} $ml={1} $run><Icon name="book" size={24} /></TaskButton>
        <TaskScroller>
          <ChevronUp size={11} strokeWidth={3} />
          <ChevronDown size={11} strokeWidth={3} />
        </TaskScroller>
        <TaskDivider $ml={13} $mr={13} />
        <TrayText $c="#b8c2c6">链接</TrayText>
        <TraySlot $ml={24}><Users size={15} strokeWidth={1.5} /></TraySlot>
        <TwoLine $w={60} $ml={23}><span>73%</span><span>CPU使用</span></TwoLine>
        <TraySlot $ml={14}><ChevronUp size={16} strokeWidth={1.5} /></TraySlot>
        <TraySlot $ml={9}><Icon name="bellW" /></TraySlot>
        <TraySlot $ml={8}><Icon name="battery" /></TraySlot>
        <TraySlot $ml={10}><Wifi size={15} strokeWidth={1.5} /></TraySlot>
        <TraySlot $ml={5}><Volume1 size={16} strokeWidth={1.5} /></TraySlot>
        <TraySlot $w={24} $ml={8}><Keyboard size={22} strokeWidth={1} /></TraySlot>
        <TrayText $ml={10}>英</TrayText>
        <TraySlot $ml={15}><TraySogou>S</TraySogou></TraySlot>
        <TwoLine $w={77} $ml={5}><span>20:21</span><span>2018/9/4</span></TwoLine>
        <TaskButton $w={36}><Icon name="note" /><NoteBadge>3</NoteBadge></TaskButton>
      </Taskbar>

      <SogouLogo $x={632} $y={29} $s={24}>S</SogouLogo>
      <ImeBar $x={653} $y={31} $w={184} $pad={6}>
        <ImeSlot>英</ImeSlot>
        <ImeIcons />
      </ImeBar>
      <SogouLogo $x={795} $y={103} $s={25}>S</SogouLogo>
      <ImeBar $x={817} $y={104} $w={183} $pad={6}>
        <ImeSlot>中</ImeSlot>
        <ImeIcons />
      </ImeBar>
    </Page>
  );
}
